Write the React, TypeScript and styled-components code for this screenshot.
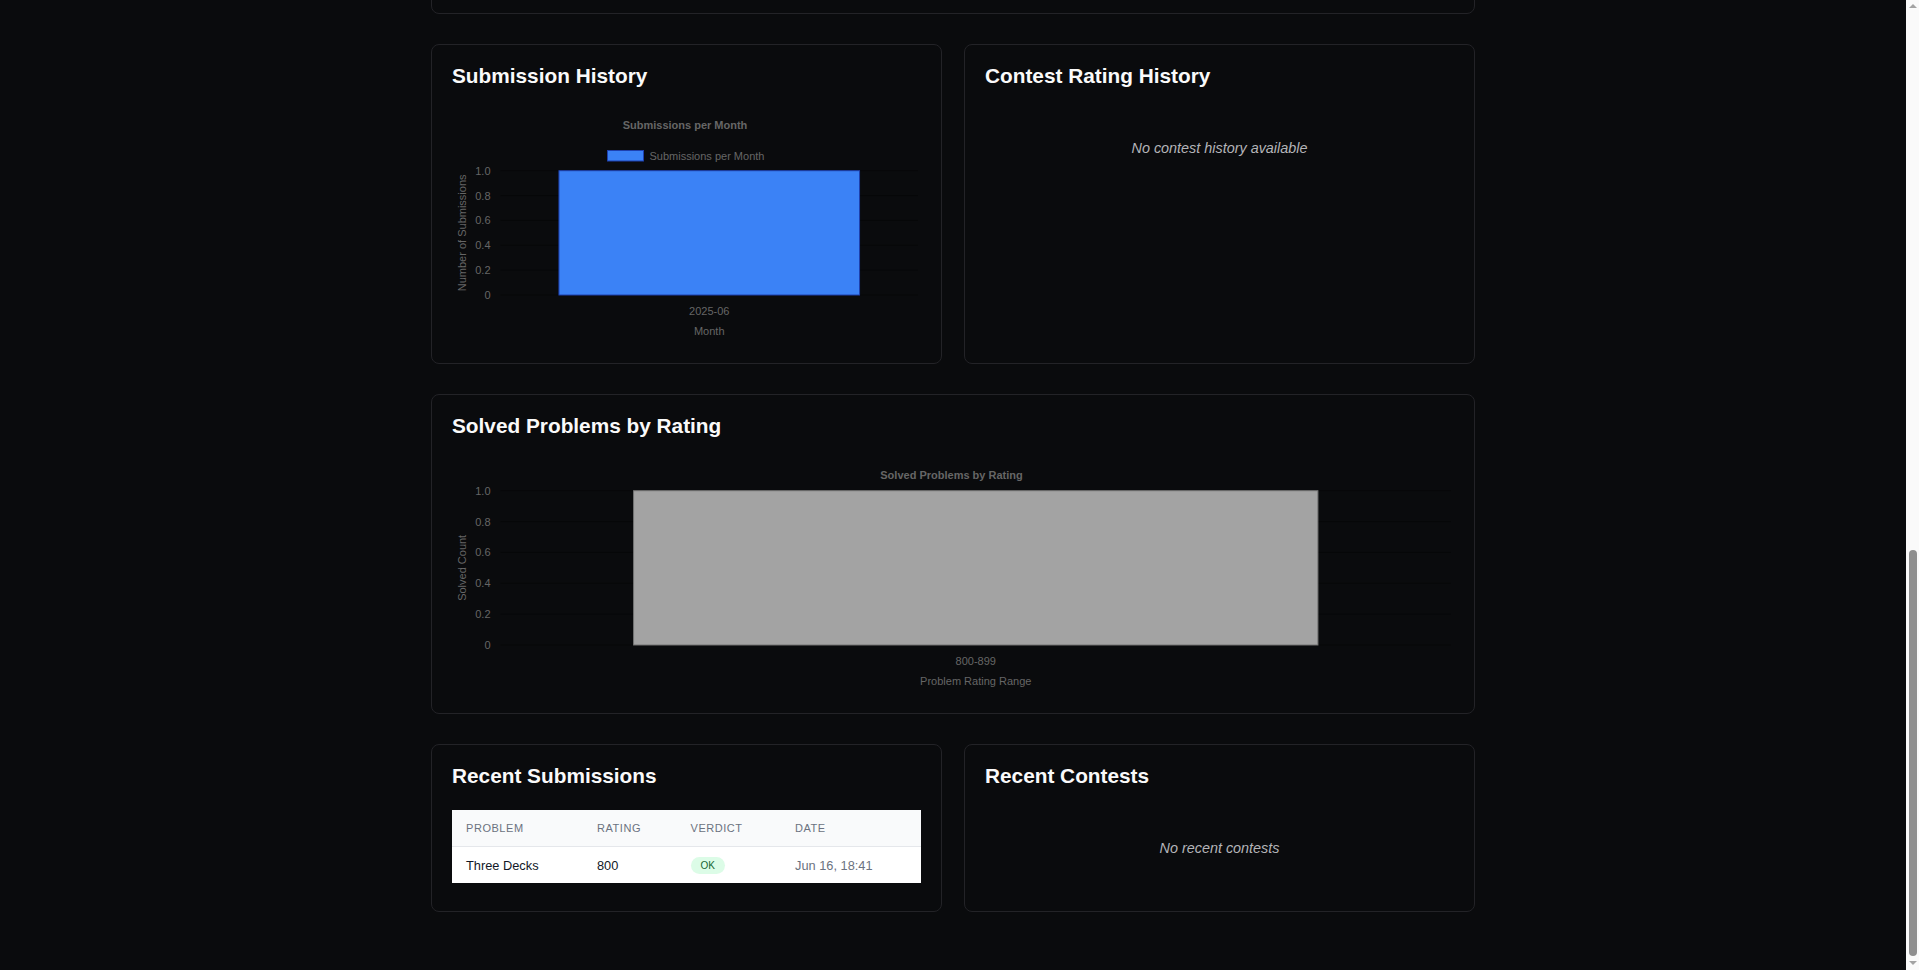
import { useLayoutEffect, useState } from 'react';
import styled, { createGlobalStyle } from 'styled-components';

const RAIL_WIDTH = 13;
const ARROW = 14;

const GlobalStyle = createGlobalStyle`
  html, body {
    margin: 0;
    background: #0a0b0d;
  }
  body {
    padding-right: ${RAIL_WIDTH}px;
    font-family: "Liberation Sans", Arial, sans-serif;
    color: #e5e5e5;
  }
`;

const Page = styled.div`
  width: 1044px;
  margin: 0 auto;
  padding: 28px 0 58px;
  display: flex;
  flex-direction: column;
  gap: 30px;
`;

const Row = styled.div`
  display: grid;
  grid-template-columns: 1fr 1fr;
  gap: 22px;
`;

const Card = styled.section<{ $minHeight?: number }>`
  background: #0a0b0d;
  border: 1px solid #232327;
  border-radius: 8px;
  padding: 20px;
  min-height: ${(p) => (p.$minHeight ? `${p.$minHeight}px` : 'auto')};
`;

const CardTitle = styled.h3`
  margin: 0;
  font-size: 20.8px;
  line-height: 1.1;
  font-weight: 700;
  color: #fafafa;
`;

const ChartBox = styled.div`
  margin-top: 12px;
`;

const Empty = styled.p`
  margin: 12px 0 0;
  padding: 40px 0 24px;
  text-align: center;
  font-style: italic;
  font-size: 14.4px;
  line-height: 1.15;
  color: #b4b4b8;
`;

const TableWrap = styled.div`
  margin: 22px 0 8px;
  background: #ffffff;
  overflow: hidden;
`;

const Table = styled.table`
  width: 100%;
  border-collapse: collapse;
  table-layout: fixed;
`;

const Th = styled.th<{ $width?: number }>`
  width: ${(p) => (p.$width ? `${p.$width}px` : 'auto')};
  height: 37px;
  padding: 0 14px;
  box-sizing: border-box;
  text-align: left;
  font-size: 11px;
  font-weight: 400;
  letter-spacing: 0.05em;
  text-transform: uppercase;
  color: #6b7280;
  background: #f9fafb;
  border-bottom: 1px solid #e5e7eb;
`;

const Td = styled.td<{ $muted?: boolean }>`
  height: 36px;
  padding: 0 14px;
  font-size: 12.8px;
  color: ${(p) => (p.$muted ? '#6b7280' : '#111827')};
`;

const Verdict = styled.span<{ $ok: boolean }>`
  display: inline-block;
  padding: 2px 10px;
  border-radius: 999px;
  font-size: 10px;
  line-height: 13px;
  background: ${(p) => (p.$ok ? '#dcfce7' : '#fee2e2')};
  color: ${(p) => (p.$ok ? '#166534' : '#991b1b')};
`;

/* page scrollbar, drawn since the window's own one is not shown */
const Rail = styled.div`
  position: fixed;
  top: 0;
  right: 0;
  bottom: 0;
  width: ${RAIL_WIDTH}px;
  background: #fafafa;
`;

const Arrow = styled.div<{ $down?: boolean }>`
  position: absolute;
  left: 3px;
  ${(p) => (p.$down ? 'bottom: 5px;' : 'top: 4px;')}
  width: 0;
  height: 0;
  border-left: 4px solid transparent;
  border-right: 4px solid transparent;
  ${(p) => (p.$down ? 'border-top' : 'border-bottom')}: 4px solid #a3a3a3;
`;

const Thumb = styled.div`
  position: absolute;
  left: 3px;
  width: 8px;
  border-radius: 4px;
  background: #8f8f8f;
`;

function ScrollRail() {
  const [thumb, setThumb] = useState({ top: 0, height: 0 });

  useLayoutEffect(() => {
    const update = () => {
      const doc = document.documentElement;
      const track = window.innerHeight - 2 * ARROW;
      setThumb({
        top: ARROW + (track * window.scrollY) / doc.scrollHeight,
        height: (track * doc.clientHeight) / doc.scrollHeight,
      });
    };
    // the view shows the bottom of a long profile page
    window.scrollTo(0, document.documentElement.scrollHeight);
    update();
    window.addEventListener('scroll', update);
    window.addEventListener('resize', update);
    return () => {
      window.removeEventListener('scroll', update);
      window.removeEventListener('resize', update);
    };
  }, []);

  return (
    <Rail>
      <Arrow />
      <Thumb style={{ top: thumb.top, height: thumb.height }} />
      <Arrow $down />
    </Rail>
  );
}

type BarChartProps = {
  width: number;
  title: string;
  legend?: string;
  label: string;
  xTitle: string;
  yTitle: string;
  fill: string;
  stroke: string;
};

// chart.js-like single-series bar chart, drawn at its rendered size
function BarChart({ width, title, legend, label, xTitle, yTitle, fill, stroke }: BarChartProps) {
  const height = 243;
  const left = 48.5;
  const right = width - 3;
  const top = legend ? 70.7 : 40.7;
  const bottom = 195;
  const step = (bottom - top) / 5;
  const barW = (right - left) * 0.72;
  const mid = (left + right) / 2;
  const ticks = ['0', '0.2', '0.4', '0.6', '0.8', '1.0'];
  const text = { fontFamily: '"Liberation Sans", Arial, sans-serif', fontSize: 11, fill: '#666' };

  return (
    <svg width={width} height={height} style={{ display: 'block' }}>
      <text x={width / 2 - 1.5} y={25} textAnchor="middle" dominantBaseline="central" fontWeight={700} {...text}>
        {title}
      </text>
      {legend && (
        <g>
          <rect x={width / 2 - 79} y={50.5} width={36} height={10.5} fill={fill} stroke={stroke} />
          <text x={width / 2 - 37} y={55.5} dominantBaseline="central" {...text}>
            {legend}
          </text>
        </g>
      )}
      {ticks.map((t, i) => {
        const y = bottom - i * step;
        return (
          <g key={t}>
            <line x1={left} x2={right} y1={y} y2={y} stroke="rgba(0,0,0,0.35)" />
            <text x={38.5} y={y} textAnchor="end" dominantBaseline="central" {...text}>
              {t}
            </text>
          </g>
        );
      })}
      <rect x={mid - barW / 2} y={top} width={barW} height={bottom - top} fill={fill} stroke={stroke} />
      <text x={mid} y={211} textAnchor="middle" dominantBaseline="central" {...text}>
        {label}
      </text>
      <text x={mid} y={231} textAnchor="middle" dominantBaseline="central" {...text}>
        {xTitle}
      </text>
      <text
        x={9.6}
        y={(top + bottom) / 2}
        textAnchor="middle"
        dominantBaseline="central"
        transform={`rotate(-90 9.6 ${(top + bottom) / 2})`}
        {...text}
      >
        {yTitle}
      </text>
    </svg>
  );
}

const submissions = [
  { problem: 'Three Decks', rating: 800, verdict: 'OK', date: 'Jun 16, 18:41' },
];

export default function App() {
  return (
    <>
      <GlobalStyle />
      <Page>
        <Card $minHeight={1224} />

        <Row>
          <Card>
            <CardTitle>Submission History</CardTitle>
            <ChartBox>
              <BarChart
                width={469}
                title="Submissions per Month"
                legend="Submissions per Month"
                label="2025-06"
                xTitle="Month"
                yTitle="Number of Submissions"
                fill="#3b82f6"
                stroke="#1e40af"
              />
            </ChartBox>
          </Card>
          <Card>
            <CardTitle>Contest Rating History</CardTitle>
            <Empty>No contest history available</Empty>
          </Card>
        </Row>

        <Card>
          <CardTitle>Solved Problems by Rating</CardTitle>
          <ChartBox>
            <BarChart
              width={1002}
              title="Solved Problems by Rating"
              label="800-899"
              xTitle="Problem Rating Range"
              yTitle="Solved Count"
              fill="#a3a3a3"
              stroke="#737373"
            />
          </ChartBox>
        </Card>

        <Row>
          <Card>
            <CardTitle>Recent Submissions</CardTitle>
            <TableWrap>
              <Table>
                <thead>
                  <tr>
                    <Th $width={131}>Problem</Th>
                    <Th $width={93.5}>Rating</Th>
                    <Th $width={104.5}>Verdict</Th>
                    <Th>Date</Th>
                  </tr>
                </thead>
                <tbody>
                  {submissions.map((s) => (
                    <tr key={s.problem}>
                      <Td>{s.problem}</Td>
                      <Td>{s.rating}</Td>
                      <Td>
                        <Verdict $ok={s.verdict === 'OK'}>{s.verdict}</Verdict>
                      </Td>
                      <Td $muted>{s.date}</Td>
                    </tr>
                  ))}
                </tbody>
              </Table>
            </TableWrap>
          </Card>
          <Card>
            <CardTitle>Recent Contests</CardTitle>
            <Empty>No recent contests</Empty>
          </Card>
        </Row>
      </Page>
      <ScrollRail />
    </>
  );
}
